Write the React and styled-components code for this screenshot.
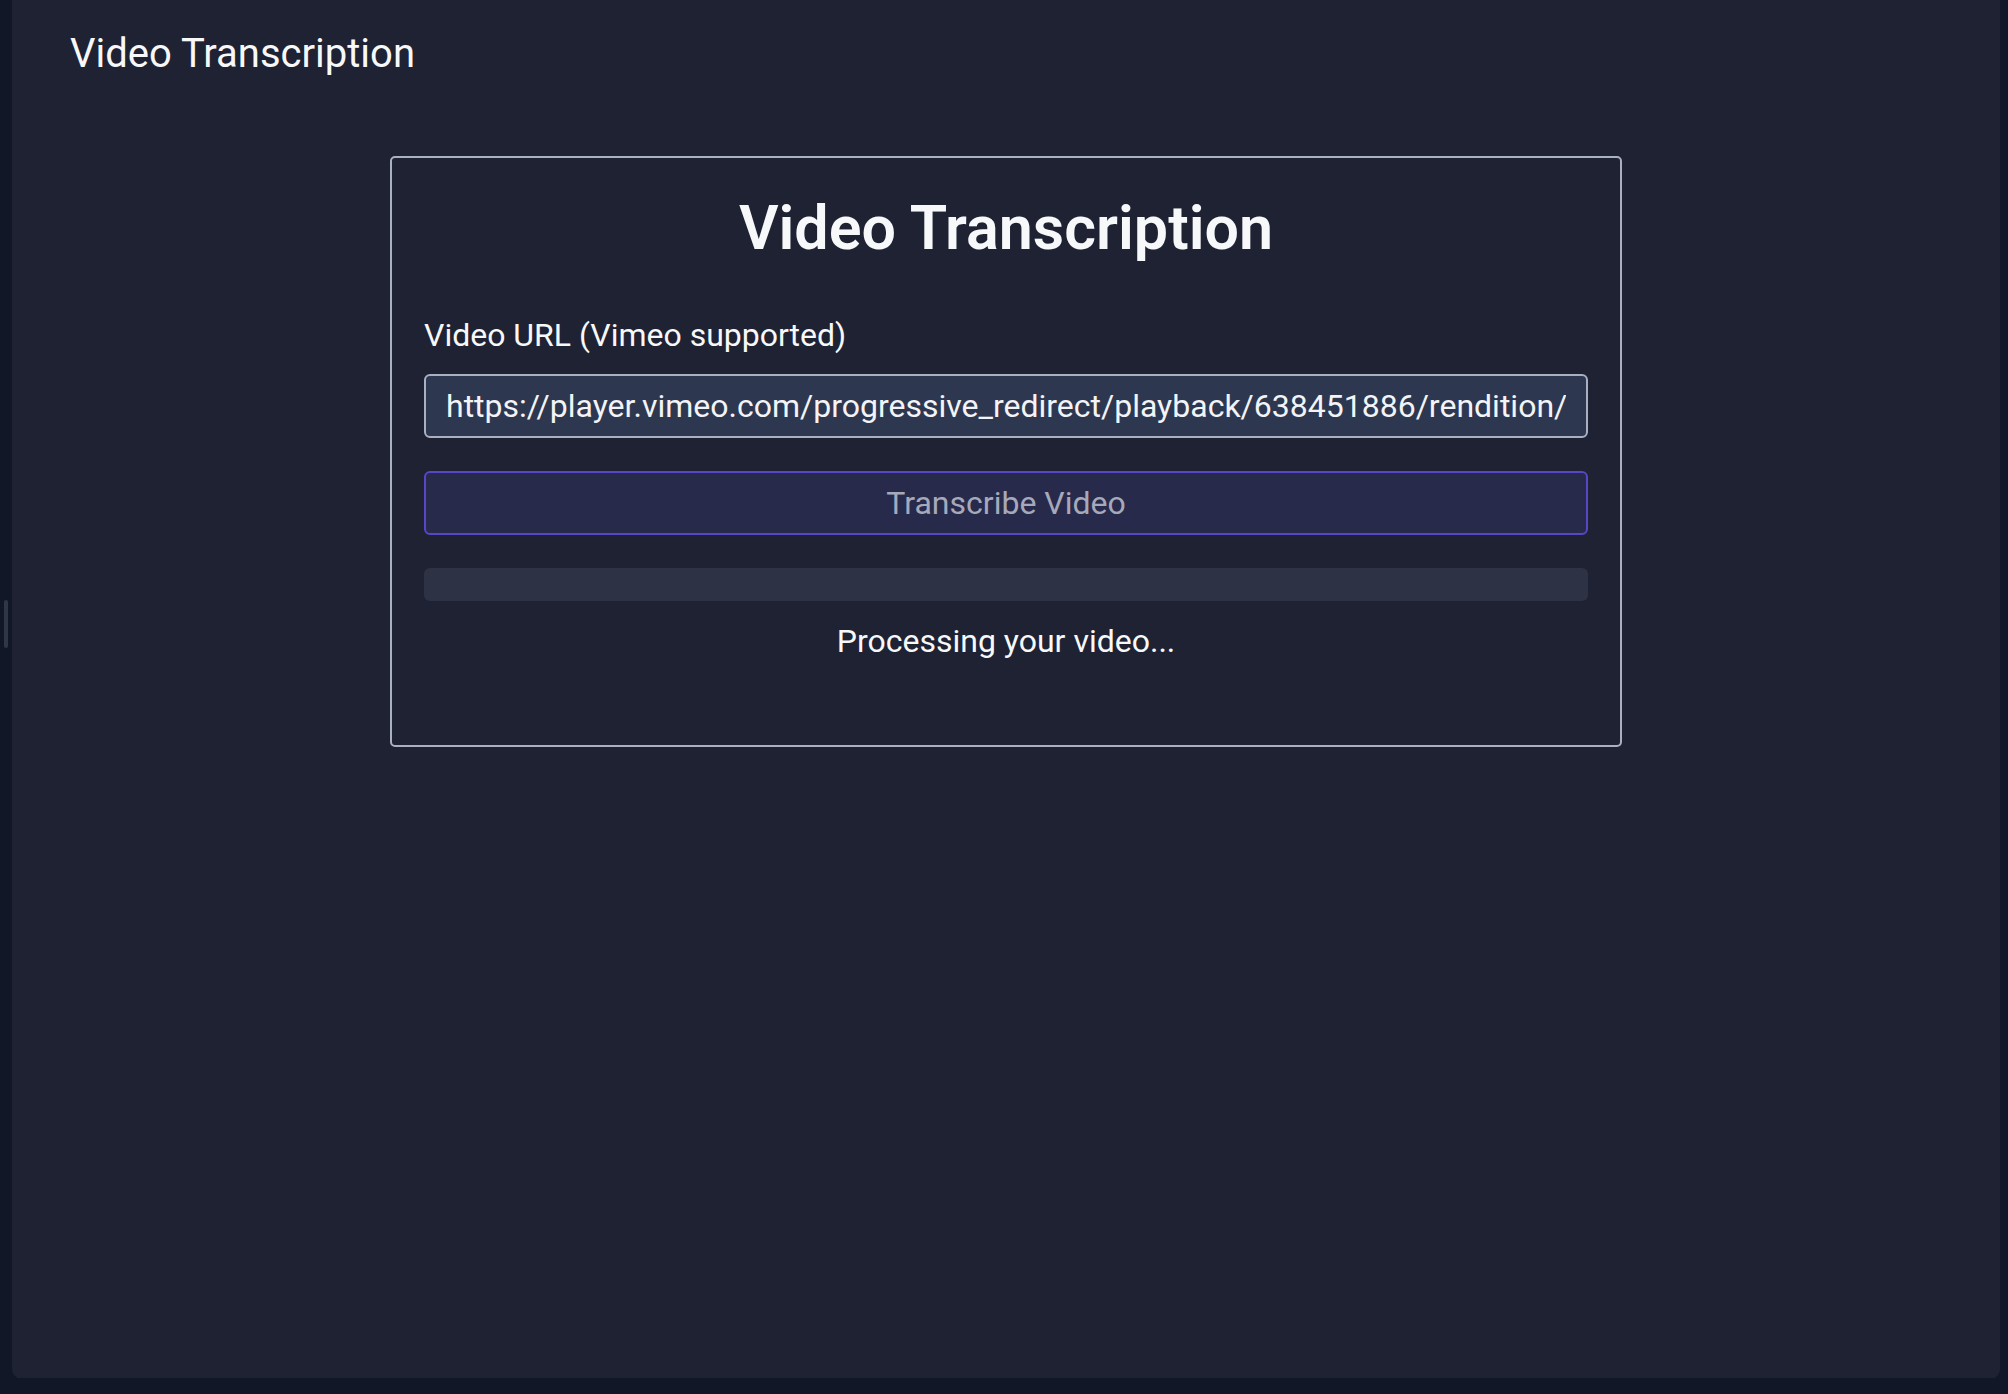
import React from "react";
import styled, { createGlobalStyle } from "styled-components";

const GlobalStyle = createGlobalStyle`
  html, body {
    margin: 0;
    padding: 0;
    background: #111726;
  }
  body {
    font-family: Roboto, "Liberation Sans", sans-serif;
    color: #f7f8fa;
  }
  * { box-sizing: border-box; }
`;

const Frame = styled.div`
  position: relative;
  margin-left: 12px;
  width: 1988px;
  height: 1378px;
  background: #1e2233;
  border-radius: 0 0 10px 10px;
  box-shadow: 0 1px 0 0 rgba(120, 130, 160, 0.12);
`;

const Handle = styled.div`
  position: absolute;
  left: -8px;
  top: 600px;
  width: 4px;
  height: 48px;
  border-radius: 2px;
  background: #2f3648;
`;

const Header = styled.header`
  padding: 30px 58px 0;
  font-size: 40px;
  line-height: 48px;
  font-weight: 400;
  color: #f7f8fa;
`;

const Main = styled.main`
  display: flex;
  justify-content: center;
  padding-top: 78px;
`;

const Card = styled.section`
  width: 1232px;
  border: 2px solid #a9b0c2;
  border-radius: 5px;
  padding: 34px 32px 80px;
  display: flex;
  flex-direction: column;
`;

const Title = styled.h1`
  margin: 0 0 46px;
  text-align: center;
  font-size: 61px;
  line-height: 1.2;
  font-weight: 600;
  color: #f7f8fa;
`;

const Label = styled.label`
  font-size: 32px;
  line-height: 48px;
  color: #f7f8fa;
  margin-bottom: 15px;
`;

const UrlInput = styled.input`
  height: 64px;
  width: 100%;
  border: 2px solid #a9b0c2;
  border-radius: 6px;
  background: #2e3750;
  color: #f3f4f7;
  font-family: inherit;
  font-size: 32px;
  padding: 0 20px;
  outline: none;
`;

const Button = styled.button`
  margin-top: 33px;
  height: 64px;
  width: 100%;
  border: 2px solid #5747c6;
  border-radius: 6px;
  background: #282a4b;
  color: #a6a9b9;
  font-family: inherit;
  font-size: 32px;
  cursor: not-allowed;
`;

const Progress = styled.div`
  margin-top: 33px;
  height: 33px;
  border-radius: 6px;
  background: #2d3245;
  overflow: hidden;
`;

const ProgressFill = styled.div`
  height: 100%;
  background: #5747c6;
`;

const Status = styled.p`
  margin: 16px 0 0;
  text-align: center;
  font-size: 32px;
  line-height: 48px;
  color: #f7f8fa;
`;

export default function App() {
  const progress = 0;
  return (
    <>
      <GlobalStyle />
      <Frame>
        <Handle />
        <Header>Video Transcription</Header>
        <Main>
          <Card>
            <Title>Video Transcription</Title>
            <Label htmlFor="url">Video URL (Vimeo supported)</Label>
            <UrlInput
              id="url"
              readOnly
              value="https://player.vimeo.com/progressive_redirect/playback/638451886/rendition/720p/file.mp4"
            />
            <Button disabled>Transcribe Video</Button>
            <Progress>
              <ProgressFill style={{ width: `${progress}%` }} />
            </Progress>
            <Status>Processing your video...</Status>
          </Card>
        </Main>
      </Frame>
    </>
  );
}
